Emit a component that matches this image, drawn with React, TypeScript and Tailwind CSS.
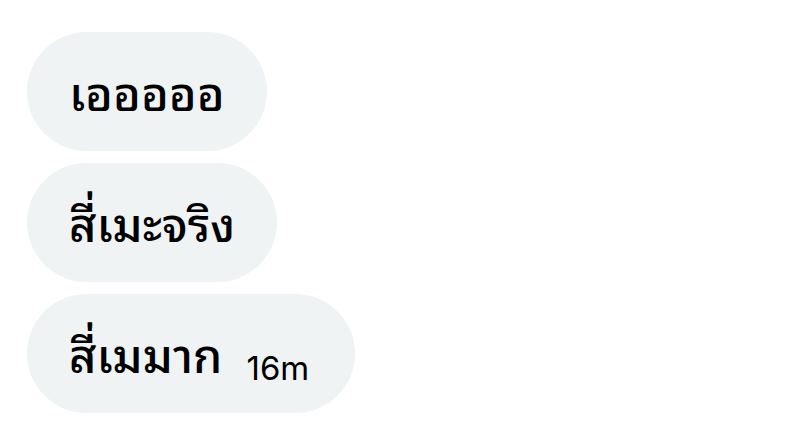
import React from "react";

type Message = { text: string; time?: string };

const messages: Message[] = [
  { text: "เอออออ" },
  { text: "สี่เมะจริง" },
  { text: "สี่เมมาก", time: "16m" },
];

function Bubble({ text, time }: Message) {
  return (
    <li className="flex h-[119px] items-center rounded-full bg-[#eff3f4] px-[42px]">
      <p className="pb-1 text-[47px] leading-[64px] font-medium whitespace-nowrap">{text}</p>
      {time && (
        <time className="mr-1 ml-6 pt-7 font-['Inter',sans-serif] text-[33px] leading-[40px]">{time}</time>
      )}
    </li>
  );
}

export default function App() {
  return (
    <main className="min-h-screen bg-white px-[27px] py-8 font-['Noto_Sans_Thai_Looped','Loma','Roboto',sans-serif] text-black">
      <ul className="flex flex-col items-start gap-3">
        {messages.map((message) => (
          <Bubble key={message.text} {...message} />
        ))}
      </ul>
    </main>
  );
}
